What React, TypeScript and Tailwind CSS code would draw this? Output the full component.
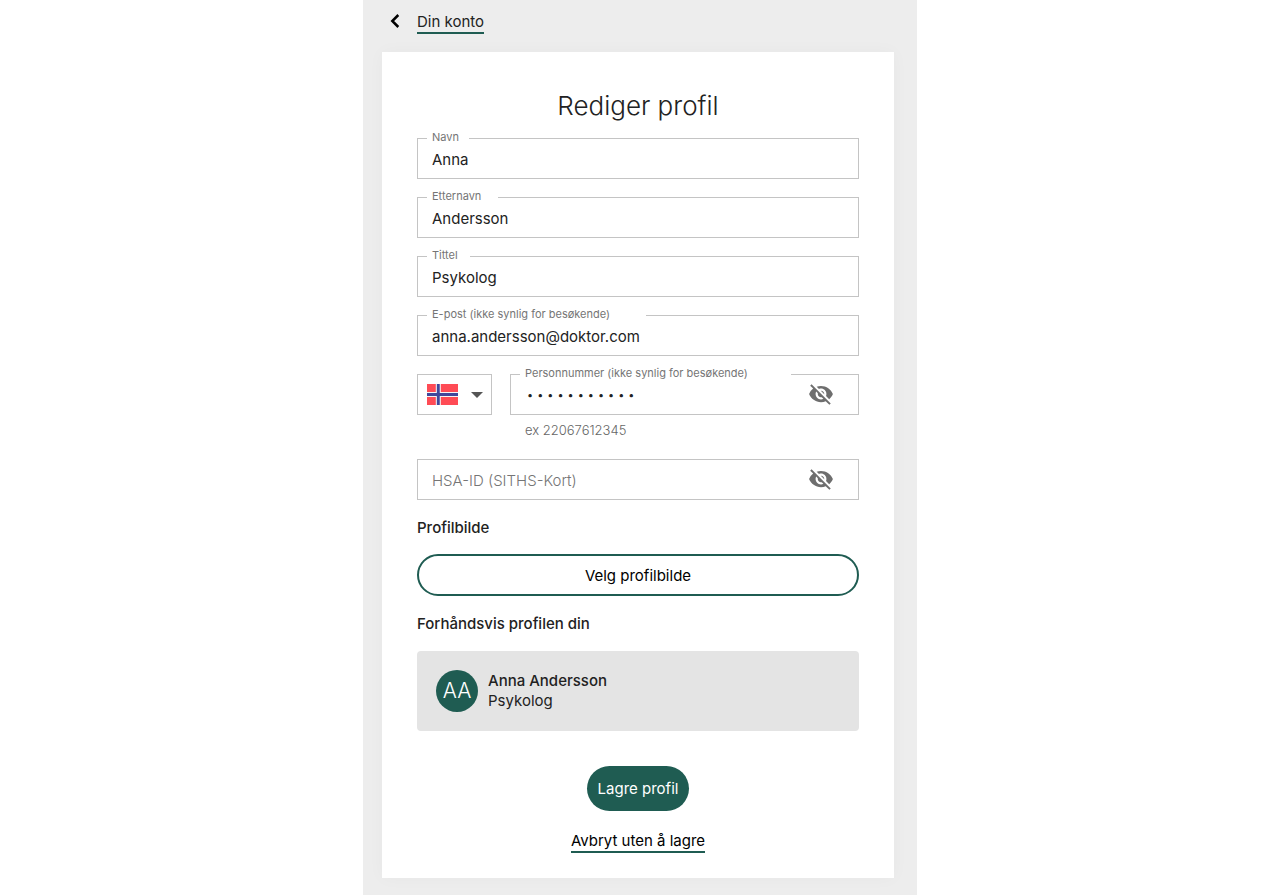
import { useState } from 'react';
import type { ReactNode } from 'react';
import { MdVisibilityOff } from 'react-icons/md';

interface TextFieldProps {
  id: string;
  label: string;
  notch: string;
  value: string;
  onChange: (value: string) => void;
  type?: string;
  inputClassName?: string;
  children?: ReactNode;
}

function TextField({
  id,
  label,
  notch,
  value,
  onChange,
  type = 'text',
  inputClassName = 'pt-0.5 text-[15px]',
  children,
}: TextFieldProps) {
  return (
    <div className="relative flex h-[41px] items-center border border-[#c4c4c4]">
      <label
        htmlFor={id}
        className={`absolute -top-[10px] left-[9px] bg-white pl-[5px] text-[11px] leading-4 whitespace-nowrap text-[#757575] ${notch}`}
      >
        {label}
      </label>
      <input
        id={id}
        type={type}
        value={value}
        autoComplete="off"
        onChange={(event) => onChange(event.target.value)}
        className={`h-full min-w-0 flex-1 bg-transparent px-[14px] outline-none ${inputClassName}`}
      />
      {children}
    </div>
  );
}

function VisibilityButton({ label, onClick }: { label: string; onClick: () => void }) {
  return (
    <button type="button" aria-label={label} onClick={onClick} className="mr-6 pb-0.5 text-[#6e6e6e]">
      <MdVisibilityOff className="size-[26px]" />
    </button>
  );
}

function NorwegianFlag() {
  return (
    <svg viewBox="0 0 31 21" className="h-[21px] w-[31px]" aria-hidden="true">
      <rect width="31" height="21" fill="#ff4b55" />
      <path d="M0 10.5h31M11.3 0v21" stroke="#f5f5f5" strokeWidth="5" />
      <path d="M0 10.5h31M11.3 0v21" stroke="#41479b" strokeWidth="2.9" />
    </svg>
  );
}

export default function App() {
  const [firstName, setFirstName] = useState('Anna');
  const [lastName, setLastName] = useState('Andersson');
  const [title, setTitle] = useState('Psykolog');
  const [email, setEmail] = useState('anna.andersson@doktor.com');
  const [personalNumber, setPersonalNumber] = useState('22067612345');
  const [hsaId, setHsaId] = useState('');
  const [showNumber, setShowNumber] = useState(false);
  const [showHsa, setShowHsa] = useState(false);

  return (
    <div className="min-h-screen bg-white font-['Inter',sans-serif] text-[15px] text-[#222222]">
      <main className="mx-auto max-w-[554px] bg-[#ededed] pr-[23px] pb-[17px] pl-[19px]">
        <nav className="flex h-[52px] items-start gap-3 pt-[10px] pl-[3px]">
          <svg viewBox="0 0 20 22" className="h-[22px] w-5" aria-hidden="true">
            <path d="M13.3 5 7.3 11l6 6" fill="none" stroke="#000" strokeWidth="2.5" />
          </svg>
          <a href="#konto" className="border-b-2 border-[#1f5c52] pt-px leading-[21px]">
            Din konto
          </a>
        </nav>

        <form
          className="bg-white px-[35px] pt-9 pb-[25px] shadow-[0_0_16px_rgba(0,0,0,0.03)]"
          onSubmit={(event) => event.preventDefault()}
        >
          <h1 className="mb-[14px] text-center text-[26px] leading-9 font-[350]">Rediger profil</h1>

          <div className="flex flex-col gap-[18px]">
            <TextField id="firstName" label="Navn" notch="w-[42px]" value={firstName} onChange={setFirstName} />
            <TextField id="lastName" label="Etternavn" notch="w-[71px]" value={lastName} onChange={setLastName} />
            <TextField id="title" label="Tittel" notch="w-[43px]" value={title} onChange={setTitle} />
            <TextField
              id="email"
              label="E-post (ikke synlig for besøkende)"
              notch="w-[219px]"
              value={email}
              onChange={setEmail}
            />

            <div className="flex items-start gap-[18px]">
              <div className="relative flex h-[41px] w-[75px] items-center justify-between border border-[#c4c4c4] pr-2 pl-[9px]">
                <NorwegianFlag />
                <svg viewBox="0 0 12 6" className="h-[6px] w-3" aria-hidden="true">
                  <path d="M0 0h12L6 6z" fill="#555" />
                </svg>
                <select aria-label="Land" className="absolute inset-0 cursor-pointer opacity-0">
                  <option>Norge</option>
                </select>
              </div>
              <div className="min-w-0 flex-1">
                <TextField
                  id="personalNumber"
                  label="Personnummer (ikke synlig for besøkende)"
                  notch="w-[271px]"
                  type={showNumber ? 'text' : 'password'}
                  inputClassName={showNumber ? 'pt-0.5 text-[15px]' : 'text-lg font-thin'}
                  value={personalNumber}
                  onChange={setPersonalNumber}
                >
                  <VisibilityButton label="Vis personnummer" onClick={() => setShowNumber(!showNumber)} />
                </TextField>
                <p className="mt-[5px] mb-px pl-[15px] text-[13px] leading-5 font-light text-[#666666]">
                  ex 22067612345
                </p>
              </div>
            </div>

            <div className="flex h-[41px] items-center border border-[#c4c4c4]">
              <input
                aria-label="HSA-ID (SITHS-Kort)"
                placeholder="HSA-ID (SITHS-Kort)"
                type={showHsa ? 'text' : 'password'}
                value={hsaId}
                autoComplete="off"
                onChange={(event) => setHsaId(event.target.value)}
                className="h-full min-w-0 flex-1 px-[14px] pt-0.5 text-[15px] outline-none placeholder:font-[350] placeholder:text-[#757575]"
              />
              <VisibilityButton label="Vis HSA-ID" onClick={() => setShowHsa(!showHsa)} />
            </div>
          </div>

          <h2 className="mt-4 mb-[14px] leading-6 font-medium">Profilbilde</h2>
          <button type="button" className="h-[42px] w-full rounded-full border-2 border-[#1f5c52] pt-0.5 text-black">
            Velg profilbilde
          </button>

          <h2 className="mt-4 mb-[15px] leading-6 font-medium">Forhåndsvis profilen din</h2>
          <section className="flex h-20 items-center gap-[10px] rounded bg-[#e4e4e4] px-[19px]">
            <div className="flex size-[42px] items-center justify-center rounded-full bg-[#1f5c52] text-[21px] font-light text-white">
              AA
            </div>
            <div className="leading-5">
              <p className="font-medium">
                {firstName} {lastName}
              </p>
              <p>{title}</p>
            </div>
          </section>

          <div className="mt-[35px] flex flex-col items-center gap-[18px]">
            <button type="submit" className="h-[45px] rounded-full bg-[#1f5c52] px-[11px] pt-0.5 text-white">
              Lagre profil
            </button>
            <a href="#konto" className="border-b-2 border-[#1f5c52] pt-px leading-[21px] text-black">
              Avbryt uten å lagre
            </a>
          </div>
        </form>
      </main>
    </div>
  );
}
